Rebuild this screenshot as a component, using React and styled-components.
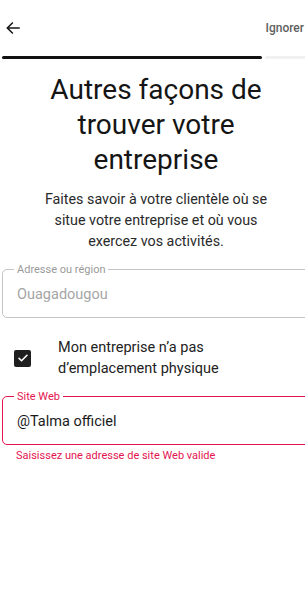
import React from "react"
import styled, { createGlobalStyle } from "styled-components"

const GlobalStyle = createGlobalStyle`
  html, body {
    margin: 0;
    padding: 0;
    background: #fff;
    overflow: hidden;
  }
  body {
    font-family: Roboto, "Noto Sans", sans-serif;
    color: #1c1c1c;
  }
`

const Page = styled.div`
  width: 308px;
  padding: 0 0 0 2px;
  display: flex;
  flex-direction: column;
`

const Header = styled.header`
  height: 56px;
  display: flex;
  align-items: center;
  justify-content: space-between;
  padding: 0 0 0 3px;
`

const BackButton = styled.button`
  border: 0;
  background: none;
  padding: 0;
  width: 16px;
  height: 16px;
  display: flex;
  color: #111;

  svg {
    width: 16px;
    height: 16px;
  }
`

const SkipLink = styled.span`
  font-size: 12px;
  font-weight: 500;
  color: #5f5f5f;
  margin-right: 6px;
`

const Progress = styled.div`
  display: flex;
  gap: 3px;
  height: 3px;
`

const ProgressPart = styled.div`
  flex: ${p => p.$grow};
  border-radius: 2px;
  background: ${p => (p.$done ? "#111" : "#f1f1f1")};
`

const Title = styled.h1`
  margin: 13px 0 0;
  font-size: 28px;
  line-height: 35px;
  font-weight: 400;
  text-align: center;
  color: #151515;
  padding: 0 40px;
`

const Intro = styled.p`
  margin: 12px auto 0;
  max-width: 244px;
  font-size: 14.3px;
  line-height: 21px;
  text-align: center;
  color: #2a2a2a;
`

const Field = styled.fieldset`
  margin: ${p => p.$top}px 0 0;
  padding: 0 14px 0 14px;
  height: 54px;
  box-sizing: border-box;
  border: 1px solid ${p => (p.$error ? "#e3154f" : "#c4c4c4")};
  border-radius: 5px;
  min-width: 0;
`

const Legend = styled.legend`
  padding: 0 3px;
  margin-left: -3px;
  font-size: 11px;
  line-height: 11px;
  color: ${p => (p.$error ? "#e3154f" : "#9a9a9a")};
`

const Value = styled.div`
  font-size: 14.5px;
  line-height: 20px;
  margin-top: 10px;
  color: ${p => (p.$muted ? "#a5a5a5" : "#1a1a1a")};
`

const CheckRow = styled.label`
  display: flex;
  align-items: center;
  gap: 27px;
  margin: 19px 0 0 12px;
`

const Box = styled.span`
  flex: none;
  width: 17px;
  height: 17px;
  border-radius: 2px;
  background: #1f1f1f;
  display: flex;
  align-items: center;
  justify-content: center;
`

const CheckText = styled.span`
  font-size: 14.5px;
  line-height: 21px;
  color: #222;
`

const ErrorText = styled.div`
  margin: 4px 0 0 14px;
  font-size: 11px;
  line-height: 14px;
  color: #e3154f;
`

export default function App() {
  return (
    <>
      <GlobalStyle />
      <Page>
        <Header>
          <BackButton aria-label="Retour">
            <svg viewBox="0 0 24 24" fill="none" stroke="currentColor" strokeWidth="2.2" strokeLinecap="square">
              <path d="M21 12H4" />
              <path d="M11 4.5 3.5 12l7.5 7.5" />
            </svg>
          </BackButton>
          <SkipLink>Ignorer</SkipLink>
        </Header>
        <Progress>
          <ProgressPart $grow={258} $done />
          <ProgressPart $grow={45} />
        </Progress>

        <Title>Autres façons de trouver votre entreprise</Title>
        <Intro>
          Faites savoir à votre clientèle où se situe votre entreprise et où vous
          exercez vos activités.
        </Intro>

        <Field $top={12}>
          <Legend>Adresse ou région</Legend>
          <Value $muted>Ouagadougou</Value>
        </Field>

        <CheckRow>
          <Box>
            <svg width="12" height="12" viewBox="0 0 24 24" fill="none" stroke="#fff" strokeWidth="3.2" strokeLinecap="round" strokeLinejoin="round">
              <path d="M4 12.5l5 5L20 6.5" />
            </svg>
          </Box>
          <CheckText>
            Mon entreprise n’a pas
            <br />
            d’emplacement physique
          </CheckText>
        </CheckRow>

        <Field $top={12} $error>
          <Legend $error>Site Web</Legend>
          <Value>@Talma officiel</Value>
        </Field>
        <ErrorText>Saisissez une adresse de site Web valide</ErrorText>
      </Page>
    </>
  )
}
